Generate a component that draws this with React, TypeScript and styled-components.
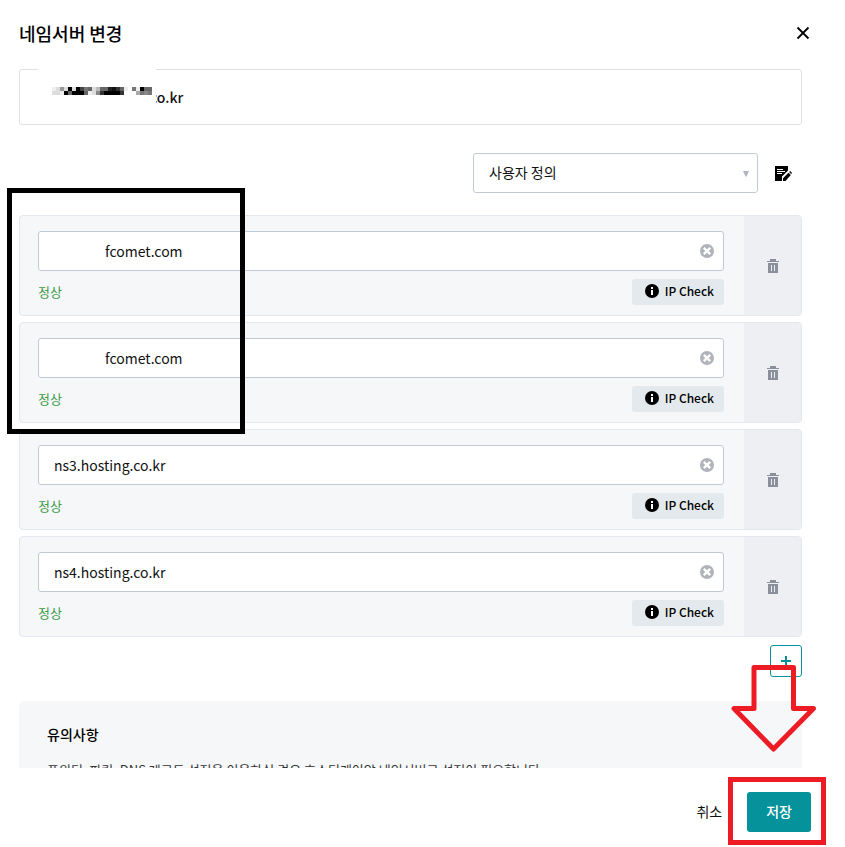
import React, { useState } from "react";
import styled, { createGlobalStyle } from "styled-components";

const Global = createGlobalStyle`
  *, *::before, *::after { box-sizing: border-box; }
  body { margin: 0; background: #fff; }
  body, button, input, select {
    font-family: "Noto Sans CJK KR", "Noto Sans", sans-serif;
    font-size: 14px;
    color: #111;
  }
  button { border: 0; padding: 0; background: none; cursor: pointer; }
  svg { display: block; }
`;

const Dialog = styled.section`
  position: relative;
  display: flex;
  flex-direction: column;
  height: 100vh;
  overflow: hidden;
`;

const Header = styled.header`
  display: flex;
  align-items: center;
  justify-content: space-between;
  height: 66px;
  padding: 0 35px 0 19px;
`;

const Title = styled.h1`
  margin: 0;
  font-size: 18px;
  line-height: 26px;
  font-weight: 500;
  color: #000;
`;

const Body = styled.main`
  flex: 1;
  min-height: 0;
  overflow: hidden;
  padding: 3px 43px 0 19px;
`;

const DomainBox = styled.div`
  position: relative;
  height: 56px;
  padding: 15px 18px 0 130px;
  border: 1px solid #dce1e6;
  border-radius: 3px;
  line-height: 24px;
  font-weight: 500;
`;

const Mask = styled.svg`
  position: absolute;
  left: 18px;
  top: -1px;
`;

const PresetRow = styled.div`
  display: flex;
  align-items: center;
  justify-content: flex-end;
  gap: 17px;
  margin: 28px 10px 22px 0;
`;

const SelectWrap = styled.div`
  position: relative;
  width: 285px;
`;

const Select = styled.select`
  appearance: none;
  width: 100%;
  height: 40px;
  padding: 0 32px 2px 15px;
  border: 1px solid #c1cad4;
  border-radius: 3px;
  background: #fff;
`;

const Caret = styled.svg`
  position: absolute;
  right: 9px;
  top: 18px;
  pointer-events: none;
`;

const List = styled.ul`
  display: flex;
  flex-direction: column;
  gap: 6px;
  margin: 0;
  padding: 0;
  list-style: none;
`;

const Item = styled.li`
  display: flex;
  border: 1px solid #e2e8ed;
  border-radius: 4px;
  background: #f5f7f9;
  overflow: hidden;
`;

const Fields = styled.div`
  flex: 1;
  padding: 15px 19px 10px 18px;
  border-right: 1px solid #f5f7f9;
`;

const InputWrap = styled.div`
  position: relative;
`;

const HostInput = styled.input<{ $indented: boolean }>`
  display: block;
  width: 100%;
  height: 40px;
  padding: 0 40px 0 ${(p) => (p.$indented ? 66 : 15)}px;
  border: 1px solid #c1cad4;
  border-radius: 3px;
  background: #fff;
`;

const ClearButton = styled.button`
  position: absolute;
  right: 10px;
  top: 13px;
`;

const StatusRow = styled.div`
  display: flex;
  align-items: flex-end;
  justify-content: space-between;
  margin-top: 7px;
`;

const Status = styled.span`
  color: #3c9a47;
  font-size: 13px;
  line-height: 27px;
`;

const CheckButton = styled.button`
  display: flex;
  align-items: center;
  gap: 6px;
  height: 26px;
  padding: 0 10px 2px 13px;
  border-radius: 3px;
  background: #e4e9ed;
  font-size: 12px;
  line-height: 18px;
  font-weight: 500;
  color: #000;
`;

const DeleteButton = styled.button`
  display: flex;
  align-items: center;
  justify-content: center;
  width: 57px;
  background: #eeeff3;
`;

const AddRow = styled.div`
  display: flex;
  justify-content: flex-end;
  margin: 8px 0 24px;
`;

const AddButton = styled.button`
  display: flex;
  align-items: center;
  justify-content: center;
  width: 32px;
  height: 32px;
  border: 1px solid #05929a;
  border-radius: 3px;
`;

const Notice = styled.section`
  padding: 22px 28px;
  border-radius: 6px;
  background: #f5f7f9;
`;

const NoticeTitle = styled.h2`
  margin: 0 0 15px;
  font-size: 14px;
  line-height: 22px;
  font-weight: 500;
  color: #000;
`;

const NoticeText = styled.p`
  margin: 0;
  font-size: 13px;
  line-height: 20px;
  color: #333;
`;

const Footer = styled.footer`
  display: flex;
  justify-content: flex-end;
  align-items: center;
  gap: 25px;
  height: 79px;
  padding: 8px 34px 0 0;
`;

const FooterButton = styled.button<{ $primary?: boolean }>`
  height: 40px;
  padding: 0 ${(p) => (p.$primary ? 19 : 0)}px 2px;
  border-radius: 3px;
  background: ${(p) => (p.$primary ? "#05929a" : "transparent")};
  color: ${(p) => (p.$primary ? "#fff" : "#111")};
  font-weight: ${(p) => (p.$primary ? 500 : 400)};
`;

const HostHighlight = styled.div`
  position: absolute;
  left: 7px;
  top: 188px;
  width: 238px;
  height: 246px;
  border: 5px solid #000;
  pointer-events: none;
`;

const SaveHighlight = styled.div`
  position: absolute;
  right: 19px;
  bottom: 2px;
  width: 98px;
  height: 68px;
  border: 5px solid #ed1c24;
  pointer-events: none;
`;

const Arrow = styled.svg`
  position: absolute;
  right: 28px;
  bottom: 94px;
  pointer-events: none;
`;

const CloseIcon = () => (
  <svg width="14" height="14" viewBox="0 0 14 14">
    <path d="M1.5 1.5l11 11M12.5 1.5l-11 11" stroke="#000" strokeWidth="1.8" />
  </svg>
);

const NoteIcon = () => (
  <svg width="17" height="16" viewBox="0 0 17 16">
    <path d="M0 1h13v4.500L7 11.500V16H0z" />
    <path d="M2 4.500h6M2 6.500h8M2 8.500h5" stroke="#fff" strokeWidth="1" />
    <path d="M8 16v-2.800l5.500-5.500 2.300 2.300L10.500 16z" />
    <path d="M14.200 7l.9-.9 1.900 1.900-.9.9z" />
  </svg>
);

const ClearIcon = () => (
  <svg width="14" height="14" viewBox="0 0 14 14">
    <circle cx="7" cy="7" r="7" fill="#b0b4ba" />
    <path d="M3.800 3.800l6.400 6.400M10.200 3.800l-6.400 6.400" stroke="#fff" strokeWidth="2.400" />
  </svg>
);

const InfoIcon = () => (
  <svg width="14" height="14" viewBox="0 0 14 14">
    <circle cx="7" cy="7" r="7" />
    <path d="M6 3h2v2H6zM6 6h2v5H6z" fill="#fff" />
  </svg>
);

const TrashIcon = () => (
  <svg width="12" height="14" viewBox="0 0 12 14" fill="#8b8f9c">
    <path d="M3 0h6v2h3v1H0V2h3z" />
    <path d="M1 4h10v10H1z" />
    <path d="M4 6h1v6H4zM7 6h1v6H7z" fill="#eeeff3" />
  </svg>
);

const PlusIcon = () => (
  <svg width="10" height="10" viewBox="0 0 10 10">
    <path d="M5 0v10M0 5h10" stroke="#05929a" strokeWidth="2" />
  </svg>
);

const mosaicRows = ["1262f2fb892499dec91081f99", "221f9fff9127cffffc0005878"];
const cell = 4;

const Mosaic = () => (
  <Mask width="118" height="54" viewBox="0 0 118 54" aria-hidden="true">
    <path d="M0 0h118v54H0z" fill="#fff" />
    {mosaicRows.map((row, y) =>
      row.split("").map((shade, x) => (
        <rect
          key={`${x}-${y}`}
          x={14 + x * cell}
          y={18 + y * cell}
          width={cell}
          height={cell}
          opacity={parseInt(shade, 16) / 15}
        />
      ))
    )}
  </Mask>
);

const servers = [
  { host: "fcomet.com", indented: true },
  { host: "fcomet.com", indented: true },
  { host: "ns3.hosting.co.kr", indented: false },
  { host: "ns4.hosting.co.kr", indented: false },
];

function ServerItem({ host, indented, index }: { host: string; indented: boolean; index: number }) {
  const [value, setValue] = useState(host);
  return (
    <Item>
      <Fields>
        <InputWrap>
          <HostInput
            $indented={indented}
            aria-label={`네임서버 ${index + 1}`}
            value={value}
            onChange={(e) => setValue(e.target.value)}
          />
          <ClearButton type="button" aria-label="지우기" onClick={() => setValue("")}>
            <ClearIcon />
          </ClearButton>
        </InputWrap>
        <StatusRow>
          <Status>정상</Status>
          <CheckButton type="button">
            <InfoIcon />
            IP Check
          </CheckButton>
        </StatusRow>
      </Fields>
      <DeleteButton type="button" aria-label="삭제">
        <TrashIcon />
      </DeleteButton>
    </Item>
  );
}

export default function App() {
  return (
    <>
      <Global />
      <Dialog role="dialog" aria-labelledby="dialog-title">
        <Header>
          <Title id="dialog-title">네임서버 변경</Title>
          <button type="button" aria-label="닫기">
            <CloseIcon />
          </button>
        </Header>
        <Body>
          <DomainBox>
            <Mosaic />
            co.kr
          </DomainBox>
          <PresetRow>
            <SelectWrap>
              <Select aria-label="네임서버 유형" defaultValue="custom">
                <option value="custom">사용자 정의</option>
              </Select>
              <Caret width="6" height="6" viewBox="0 0 6 6">
                <path d="M0 0h6L3.500 5.500h-1z" fill="#b3b5c6" />
              </Caret>
            </SelectWrap>
            <button type="button" aria-label="편집">
              <NoteIcon />
            </button>
          </PresetRow>
          <List>
            {servers.map((server, i) => (
              <ServerItem key={i} index={i} {...server} />
            ))}
          </List>
          <AddRow>
            <AddButton type="button" aria-label="추가">
              <PlusIcon />
            </AddButton>
          </AddRow>
          <Notice>
            <NoticeTitle>유의사항</NoticeTitle>
            <NoticeText>
              포워딩, 파킹, DNS 레코드 설정을 이용하실 경우 호스팅케이알 네임서버로 설정이 필요합니다.
            </NoticeText>
          </Notice>
        </Body>
        <Footer>
          <FooterButton type="button">취소</FooterButton>
          <FooterButton type="button" $primary>
            저장
          </FooterButton>
        </Footer>
        <HostHighlight />
        <Arrow width="86" height="90" viewBox="0 0 86 90" aria-hidden="true">
          <path
            d="M23 4.500H62.500V45.500H82.500L42.500 86L3 45.500H23Z"
            fill="none"
            stroke="#ed1c24"
            strokeWidth="5"
            strokeLinejoin="round"
          />
        </Arrow>
        <SaveHighlight />
      </Dialog>
    </>
  );
}
